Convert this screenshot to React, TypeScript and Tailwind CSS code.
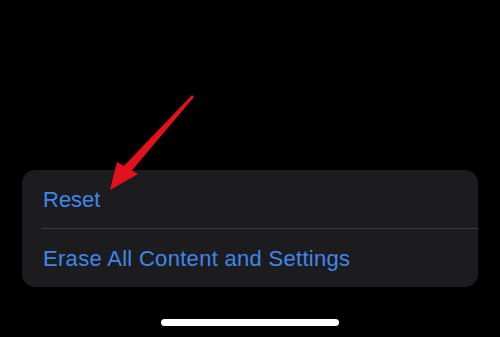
export default function App() {
  return (
    <div
      className="relative h-[337px] w-[500px] overflow-hidden bg-black"
      style={{ fontFamily: '"Liberation Sans", Arial, sans-serif' }}
    >
      <div className="flex h-full flex-col items-center pt-[170px]">
        <div className="w-[456px] rounded-[13px] bg-[#1c1c1e]">
          <div className="flex h-[58px] items-center pl-[21px] text-[22px] text-[#3f86ea]">Reset</div>
          <div className="ml-[20px] h-px bg-[#38383a]" />
          <div className="flex h-[58px] items-center pl-[21px] text-[22px] tracking-[0.3px] text-[#3f86ea]">
            Erase All Content and Settings
          </div>
        </div>
        <div className="mt-[32px] h-[7px] w-[178px] rounded-full bg-white" />
      </div>

      {/* red annotation arrow */}
      <svg className="pointer-events-none absolute left-0 top-0" width="500" height="337">
        <polygon points="192,95 194,97 128,175 121,169" fill="#e3111b" />
        <polygon points="110,190 117,162 138,174" fill="#e3111b" />
      </svg>
    </div>
  )
}
